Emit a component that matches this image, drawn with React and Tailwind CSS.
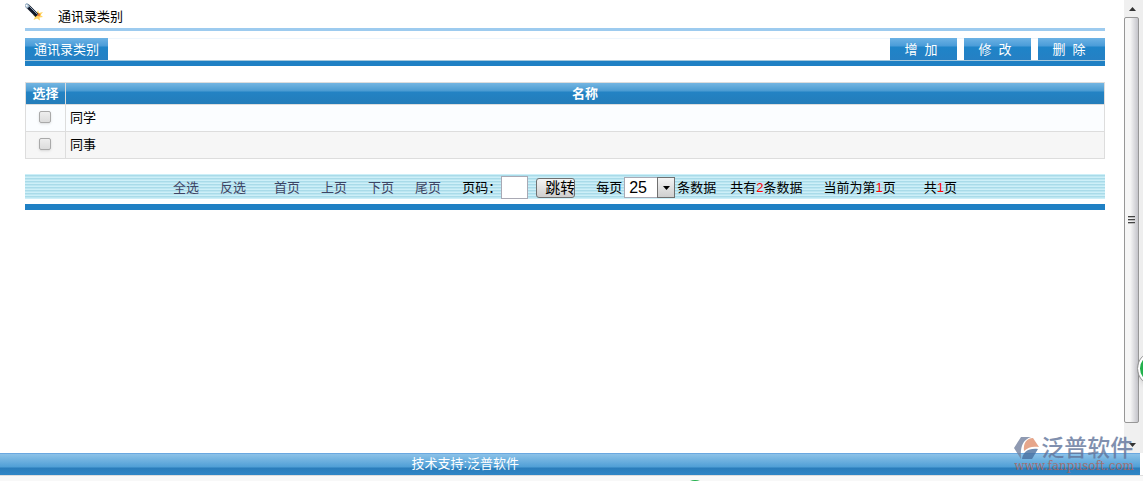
import { useState } from 'react'

const fontStack = "font-['Liberation_Sans','Noto_Sans_CJK_SC',sans-serif]"

const glossy =
  'bg-[linear-gradient(to_bottom,#6cb2e4_0,#4a9cd8_8px,#1f84c8_9px,#2580c4_100%)]'

const actions = ['增  加', '修  改', '删  除']

const categories = [
  { id: 1, name: '同学' },
  { id: 2, name: '同事' }
]

const WandIcon = () => (
  <svg viewBox="0 0 19 18" className="w-[19px] h-[18px]" aria-hidden="true">
    <path d="M13 7l1 3 4-1-2.500 3 2.500 2-3.500.500.500 3-3-2-3.500 1.500 1.500-3-2-2h3z" fill="#ffd45e" />
    <path d="M13 10l2.500 1-1 2.500-3-1z" fill="#ee7d2c" />
    <path d="M2 2.500l10 10" stroke="#111827" strokeWidth="4" />
    <path d="M.5 1l3 3.500" stroke="#9db4c8" strokeWidth="4" />
    <path d="M1 2l1.500 1.500" stroke="#fff" strokeWidth="1.500" />
    <path d="M4.500 3.500l8 8" stroke="#8fa3b8" strokeWidth="1" />
  </svg>
)

const TitleBar = () => (
  <div className="flex items-start h-[31px] border-b-3 border-[#9dcbef] pt-[3px]">
    <WandIcon />
    <h1 className="ml-[14px] pt-1 text-[13px] leading-5 text-black">通讯录类别</h1>
  </div>
)

const Toolbar = () => (
  <div className="mt-[7px] border-b-5 border-[#1f80c4]">
    <div className="flex justify-between border-t border-b border-t-[#eef6fd] border-b-[#a5c8dc]">
      <div className={`-mt-px h-[22px] px-[9px] text-[13px] leading-6 text-white ${glossy}`}>
        通讯录类别
      </div>
      <div className="-mt-px flex gap-[7px]">
        {actions.map((label) => (
          <button
            key={label}
            type="button"
            className={`w-[67px] h-[22px] pr-[5px] text-[13px] leading-6 text-white whitespace-pre ${glossy}`}
          >
            {label}
          </button>
        ))}
      </div>
    </div>
  </div>
)

const CategoryTable = ({ selected, onToggle }) => (
  <table className="mt-4 w-full border-collapse text-[13px] leading-5 text-black">
    <thead>
      <tr className="h-[22px] bg-[linear-gradient(to_bottom,#74b6e2_0,#4a9bd2_8px,#2383c4_9px,#247cb9_100%)] text-white">
        <th className="w-10 border border-[#dddddd] p-0">选择</th>
        <th className="border border-[#dddddd] p-0">名称</th>
      </tr>
    </thead>
    <tbody>
      {categories.map((item) => (
        <tr key={item.id} className="h-[27px] odd:bg-[#fbfdff] even:bg-[#f6f6f6]">
          <td className="border border-[#dddddd] pb-0.5 pl-0 pr-px pt-0">
            <input
              type="checkbox"
              aria-label={item.name}
              checked={selected.includes(item.id)}
              onChange={() => onToggle(item.id)}
              className="mx-auto block size-3 appearance-none rounded-[2px] border border-[#a9a9a9] bg-linear-to-b from-[#eeeeee] to-[#dcdcdc] shadow-sm checked:bg-[#1f80c4]"
            />
          </td>
          <td className="border border-[#dddddd] px-1 py-0">{item.name}</td>
        </tr>
      ))}
    </tbody>
  </table>
)

const PageLink = ({ children }) => (
  <a href="#" className="text-[#3d4464]">{children}</a>
)

const Num = ({ children }) => <span className="text-[#ff0000]">{children}</span>

const Pager = ({ onSelectAll, onInvert }) => {
  const [size, setSize] = useState('25')

  return (
    <div className="mt-[15px] border-b-6 border-[#1f80c4] pb-[5px]">
      <div className="flex h-[25px] items-center justify-center whitespace-nowrap bg-[repeating-linear-gradient(to_bottom,#cdeff8_0,#cdeff8_1px,#a9dbe9_1px,#a9dbe9_2px,#bce6f1_2px,#bce6f1_3px)] pt-0.5 text-[13px] leading-5 text-black">
        <div className="flex gap-[21px] text-[#3d4464]">
          <button type="button" onClick={onSelectAll}>全选</button>
          <button type="button" onClick={onInvert}>反选</button>
        </div>
        <div className="ml-7 flex gap-[21px]">
          <PageLink>首页</PageLink>
          <PageLink>上页</PageLink>
          <PageLink>下页</PageLink>
          <PageLink>尾页</PageLink>
        </div>
        <label className="ml-[21px] flex items-center">
          页码：
          <input type="text" className="h-[23px] w-[27px] border border-[#a9a9b4] bg-white px-1" />
        </label>
        <button
          type="button"
          className="ml-2 h-5 w-[39px] overflow-hidden rounded-[3px] border border-[#707070] bg-linear-to-b from-[#f4f4f4] to-[#cfcfcf] pl-2 text-left text-[15px] leading-[18px]"
        >
          跳转
        </button>
        <label className="ml-[21px] flex items-center gap-0.5">
          每页
          <span className="relative flex">
            <select
              value={size}
              onChange={(e) => setSize(e.target.value)}
              className="h-[21px] w-[51px] appearance-none border border-[#a9a9b4] bg-white pl-1 text-[16px] leading-[19px]"
            >
              <option>25</option>
              <option>50</option>
              <option>100</option>
            </select>
            <span className="pointer-events-none absolute right-0 top-0 flex h-[21px] w-[18px] items-center justify-center border border-[#707070] bg-linear-to-b from-[#f4f4f4] to-[#cfcfcf]">
              <svg viewBox="0 0 7 4" className="h-1 w-[7px]" aria-hidden="true">
                <path d="M0 0h7L3.500 4z" fill="#000" />
              </svg>
            </span>
          </span>
          条数据
        </label>
        <span className="ml-[14px]">共有<Num>2</Num>条数据</span>
        <span className="ml-[21px]">当前为第<Num>1</Num>页</span>
        <span className="ml-7">共<Num>1</Num>页</span>
      </div>
    </div>
  )
}

const Grip = () => <span className="h-0.5 w-[7px] border-t border-[#444] bg-[#bbb]"></span>

const Scrollbar = () => (
  <div className="flex w-4 shrink-0 flex-col bg-[#f0f0f0]" aria-hidden="true">
    <div className="flex h-[17px] items-center justify-center">
      <svg viewBox="0 0 7 4" className="h-1 w-[7px]">
        <path d="M3.500 0L7 4H0z" fill="#333" />
      </svg>
    </div>
    <div className="mr-px flex flex-1 flex-col items-center justify-center gap-px rounded-[2px] border border-[#979797] bg-linear-to-r from-[#f6f6f6] from-40% to-[#c4c4ca]">
      <Grip />
      <Grip />
      <Grip />
    </div>
    <div className="flex h-[30px] items-end justify-center pb-[6px]">
      <svg viewBox="0 0 7 4" className="h-1 w-[7px]">
        <path d="M0 0h7L3.500 4z" fill="#333" />
      </svg>
    </div>
  </div>
)

const Watermark = () => (
  <div className="pointer-events-none absolute bottom-[9px] right-[9px] opacity-80">
    <div className="flex items-center gap-0.5">
      <svg viewBox="0 0 25 23" className="h-[23px] w-[25px]" aria-hidden="true">
        <path d="M7 0h10C9 3 6 9 7 22L0 11z" fill="#74829f" />
        <path d="M10 14C9 6 13 1 19 1l6 9c-6-1-11 0-15 4z" fill="#e0916f" />
        <path d="M8 22c1-7 6-11 16-10l-6 10z" fill="#4a70a0" />
      </svg>
      <span className="text-[23px] leading-6 font-medium text-[#61749a]">泛普软件</span>
    </div>
    <div className="text-center font-['DejaVu_Serif',serif] text-[12px] leading-3 text-[#b0645a]">
      www.fanpusoft.com
    </div>
  </div>
)

export default function App() {
  const [selected, setSelected] = useState([])

  const toggle = (id) => {
    setSelected((prev) => (prev.includes(id) ? prev.filter((x) => x !== id) : [...prev, id]))
  }

  return (
    <div className={`relative flex h-screen flex-col overflow-hidden bg-white ${fontStack}`}>
      <div className="flex min-h-0 flex-1 border-r-3 border-[#eeeeee]">
        <main className="min-w-0 flex-1 pl-[25px] pr-[19px]">
          <TitleBar />
          <Toolbar />
          <CategoryTable selected={selected} onToggle={toggle} />
          <Pager
            onSelectAll={() => setSelected(categories.map((c) => c.id))}
            onInvert={() =>
              setSelected(categories.map((c) => c.id).filter((id) => !selected.includes(id)))
            }
          />
        </main>
        <Scrollbar />
      </div>

      {/* 底部版权 */}
      <footer className="mr-[3px] h-[22px] border-t border-[#6aa8e0] bg-[linear-gradient(to_bottom,#8cc2e8_0,#4f9fd6_13px,#2a7dbb_14px,#2f86c6_100%)] pl-[36%] text-[13px] leading-5 text-white">
        技术支持:泛普软件
      </footer>
      <div className="h-[6px] border-t border-[#dddddd] bg-[#f8f8f8]"></div>

      <Watermark />

      {/* 悬浮球 */}
      <div className="absolute -right-[28px] top-[352px] size-[33px] rounded-full border-2 border-white bg-[#22b14c] shadow-md outline outline-[#999]"></div>
      <div className="absolute -bottom-[23px] left-[683px] size-6 rounded-full bg-[#22b14c]"></div>
    </div>
  )
}
